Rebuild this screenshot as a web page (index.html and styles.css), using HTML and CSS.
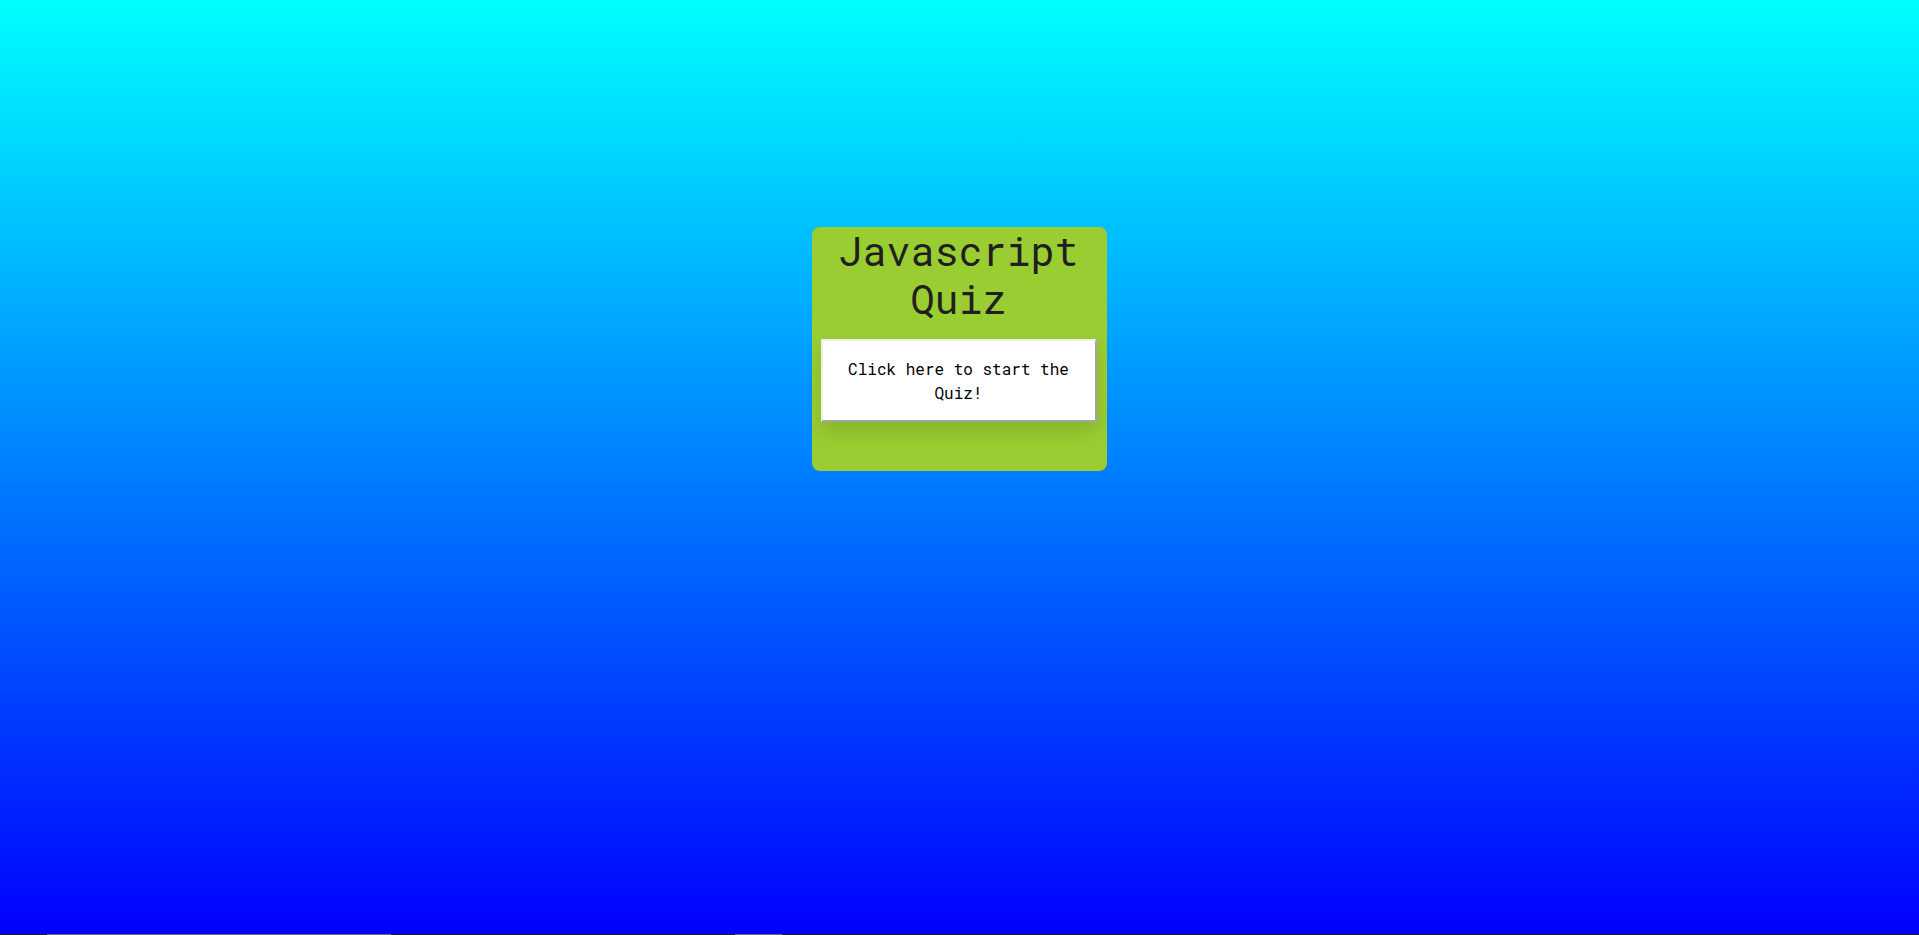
FILE: index.html
```html
<!DOCTYPE html>
<html lang="en">
<head>
<meta charset="utf-8">
<title>Javascript Quiz</title>
<link rel="stylesheet" href="styles.css">
</head>
<body>
<main class="page">
  <section class="card">
    <h1 class="title">Javascript Quiz</h1>
    <button class="start-btn" type="button">Click here to start the Quiz!</button>
  </section>
</main>
<div class="scrollbar">
  <span class="thumb thumb-a"></span>
  <span class="thumb thumb-b"></span>
</div>
</body>
</html>
```

FILE: styles.css
```css
html, body {
  margin: 0;
  padding: 0;
  height: 100%;
}

body {
  background: linear-gradient(to bottom, #00ffff 0%, #0000ff 100%);
  font-family: "Roboto Mono", "DejaVu Sans Mono", "Liberation Mono", monospace;
  overflow: hidden;
}

.page {
  height: 100%;
  display: flex;
  flex-direction: column;
  align-items: center;
  padding-top: 227px;
  box-sizing: border-box;
}

.card {
  width: 295px;
  height: 244px;
  box-sizing: border-box;
  background: #9acd32;
  border-radius: 8px;
  display: flex;
  flex-direction: column;
  align-items: center;
  padding: 0 10px 0 8px;
}

.title {
  margin: 0;
  font-family: "Roboto Mono", "DejaVu Sans Mono", monospace;
  font-size: 40px;
  line-height: 48px;
  font-weight: 400;
  color: #1f1f1f;
  text-align: center;
}

.start-btn {
  margin-top: 16px;
  width: 276px;
  height: 83px;
  box-sizing: border-box;
  padding: 0 16px;
  background: #ffffff;
  border-style: solid;
  border-width: 2px;
  border-color: #eeeeee #a3a3a3 #a3a3a3 #eeeeee;
  box-shadow: 0 10px 18px rgba(0, 0, 0, 0.12);
  font-family: "Roboto Mono", "DejaVu Sans Mono", monospace;
  font-size: 16px;
  line-height: 24px;
  font-weight: 400;
  color: #000000;
  text-align: center;
  cursor: pointer;
}

.scrollbar {
  position: fixed;
  left: 0;
  right: 0;
  bottom: 0;
  height: 1px;
  background: #1f1f1f;
}

.thumb {
  position: absolute;
  top: 0;
  height: 1px;
  background: #6e6e6e;
}

.thumb-a {
  left: 47px;
  width: 344px;
}

.thumb-b {
  left: 735px;
  width: 47px;
}
```
